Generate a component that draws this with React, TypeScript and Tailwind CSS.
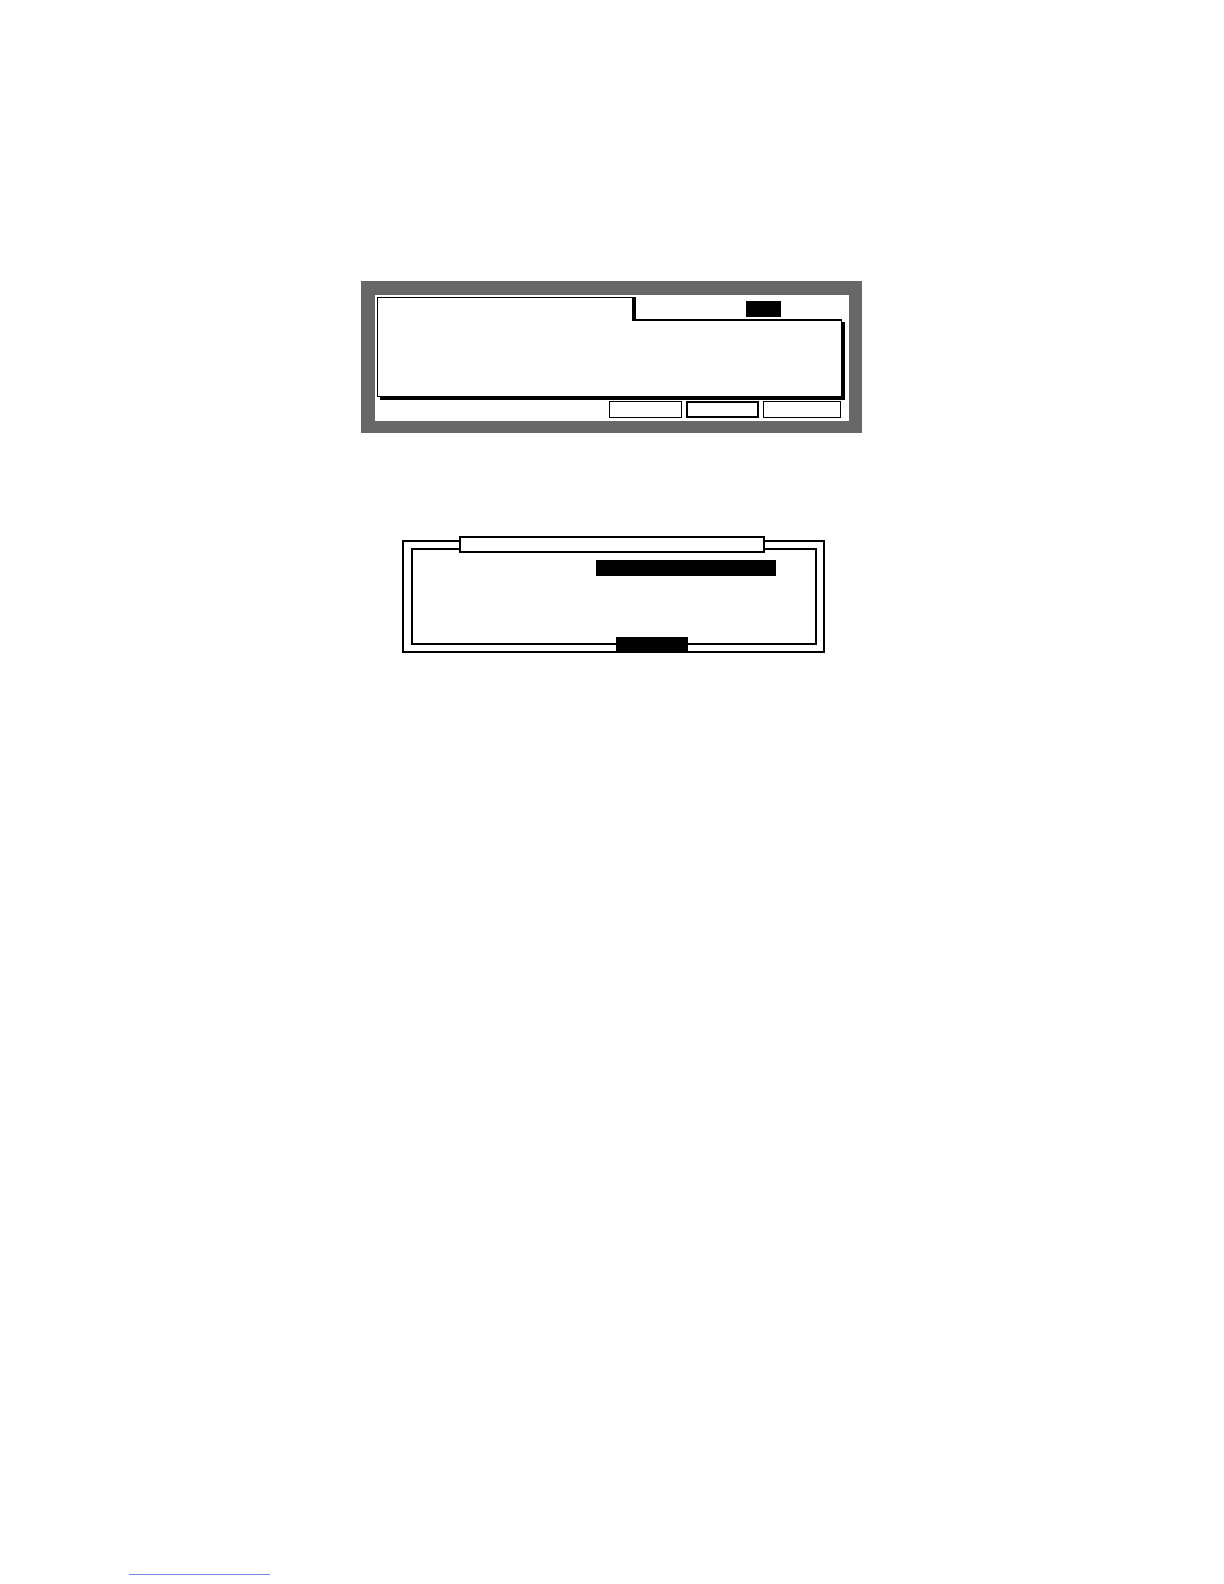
export default function App() {
  return (
    <div className="min-h-[1584px] w-[1224px] bg-white font-['Liberation_Sans',sans-serif] pt-[281px]">
      {/* main screen with grey bezel */}
      <div className="ml-[361px] w-[501px] h-[152px] bg-[#686868] pl-[14px] pr-[13px] pt-[14px] pb-[12px]">
        <div className="h-full w-full bg-white pt-[2px] pl-[2px] flex flex-col">
          <div className="flex items-start">
            <div className="relative z-10 w-[259px] h-[24px] -mb-[2px] bg-white border-t border-l border-r-4 border-black" />
            <div className="ml-[110px] mt-[4px] w-[35px] h-[16px] bg-black" />
          </div>
          <div className="w-[465px] h-[78px] border border-t-2 border-black shadow-[3px_3px_0_#000]" />
          <div className="flex gap-[4px] mt-[4px] ml-[232px]">
            <div className="w-[73px] h-[17px] border border-black" />
            <div className="w-[73px] h-[17px] border-2 border-black" />
            <div className="w-[78px] h-[17px] border border-black" />
          </div>
        </div>
      </div>

      {/* dialog box */}
      <div className="relative ml-[402px] mt-[107px] w-[423px] h-[113px] border-2 border-black pt-[6px] pl-[7px] pr-[6px] pb-[6px]">
        <div className="absolute left-[55px] -top-[6px] w-[306px] h-[17px] bg-white border-2 border-black z-10" />
        <div className="h-full w-full border-2 border-black">
          <div className="ml-[183px] mt-[10px] w-[180px] h-[16px] bg-black" />
        </div>
        <div className="absolute left-[212px] -bottom-[2px] w-[72px] h-[16px] bg-black" />
      </div>

      <div className="ml-[129px] mt-[921px] w-[141px] h-px bg-[#7b83e0]" />
    </div>
  );
}
